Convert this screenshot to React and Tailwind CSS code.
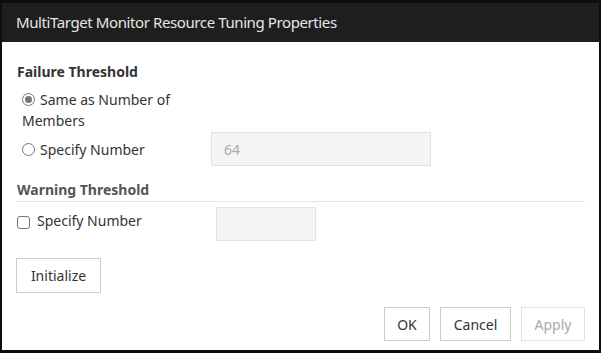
import React from "react";

export default function App() {
  return (
    <div className="w-[601px] h-[353px] bg-[#0e0e0e] pt-[3px] pl-[2px] pr-[2px] pb-[3px] flex flex-col" style={{ fontFamily: '"Noto Sans", "Open Sans", sans-serif' }}>
      <div className="h-[39px] bg-[#1e1e1e] flex items-center pl-[14px] text-[15px] tracking-[-0.4px] text-[#e6e6e6]">
        MultiTarget Monitor Resource Tuning Properties
      </div>
      <div className="flex-1 bg-white pl-[15px] pr-[14px] text-[14px] text-[#333] flex flex-col">
        <div className="mt-[20px] font-bold leading-[20px]">Failure Threshold</div>
        <div className="flex mt-[7px]">
          <div className="w-[194px] pl-[5px] leading-[21px]">
            <div className="flex items-start">
              <span className="mt-[4px] w-[13px] h-[13px] rounded-full border border-[#777] flex items-center justify-center shrink-0">
                <span className="w-[7px] h-[7px] rounded-full bg-[#777]"></span>
              </span>
              <span className="ml-[5px]">Same as Number of</span>
            </div>
            <div>Members</div>
          </div>
        </div>
        <div className="flex items-center mt-[1px]">
          <div className="w-[194px] pl-[5px] flex items-center">
            <span className="w-[13px] h-[13px] rounded-full border border-[#777] shrink-0"></span>
            <span className="ml-[5px]">Specify Number</span>
          </div>
          <div className="w-[220px] h-[34px] bg-[#f5f5f5] border border-[#e2e2e2] flex items-center pl-[12px] text-[#aaa]">64</div>
        </div>
        <div className="mt-[14px] font-bold text-[#555] leading-[20px]">Warning Threshold</div>
        <div className="h-px bg-[#e5e5e5] mt-[1px]"></div>
        <div className="flex items-start mt-[5px]">
          <div className="w-[199px] flex items-center mt-[3px]">
            <span className="mt-[3px] w-[13px] h-[13px] rounded-[3px] border border-[#777] shrink-0"></span>
            <span className="ml-[7px]">Specify Number</span>
          </div>
          <div className="w-[100px] h-[34px] bg-[#f5f5f5] border border-[#e2e2e2]"></div>
        </div>
        <div className="mt-[17px] -ml-[1px]">
          <button className="w-[85px] h-[35px] border border-[#ccc] bg-white text-[#333]">Initialize</button>
        </div>
        <div className="flex justify-end gap-[10px] mt-[14px]">
          <button className="w-[46px] h-[34px] border border-[#ccc] bg-white text-[#333]">OK</button>
          <button className="w-[71px] h-[34px] border border-[#ccc] bg-white text-[#333]">Cancel</button>
          <button className="w-[64px] h-[34px] border border-[#e0e0e0] bg-white text-[#aaa]">Apply</button>
        </div>
      </div>
    </div>
  );
}
